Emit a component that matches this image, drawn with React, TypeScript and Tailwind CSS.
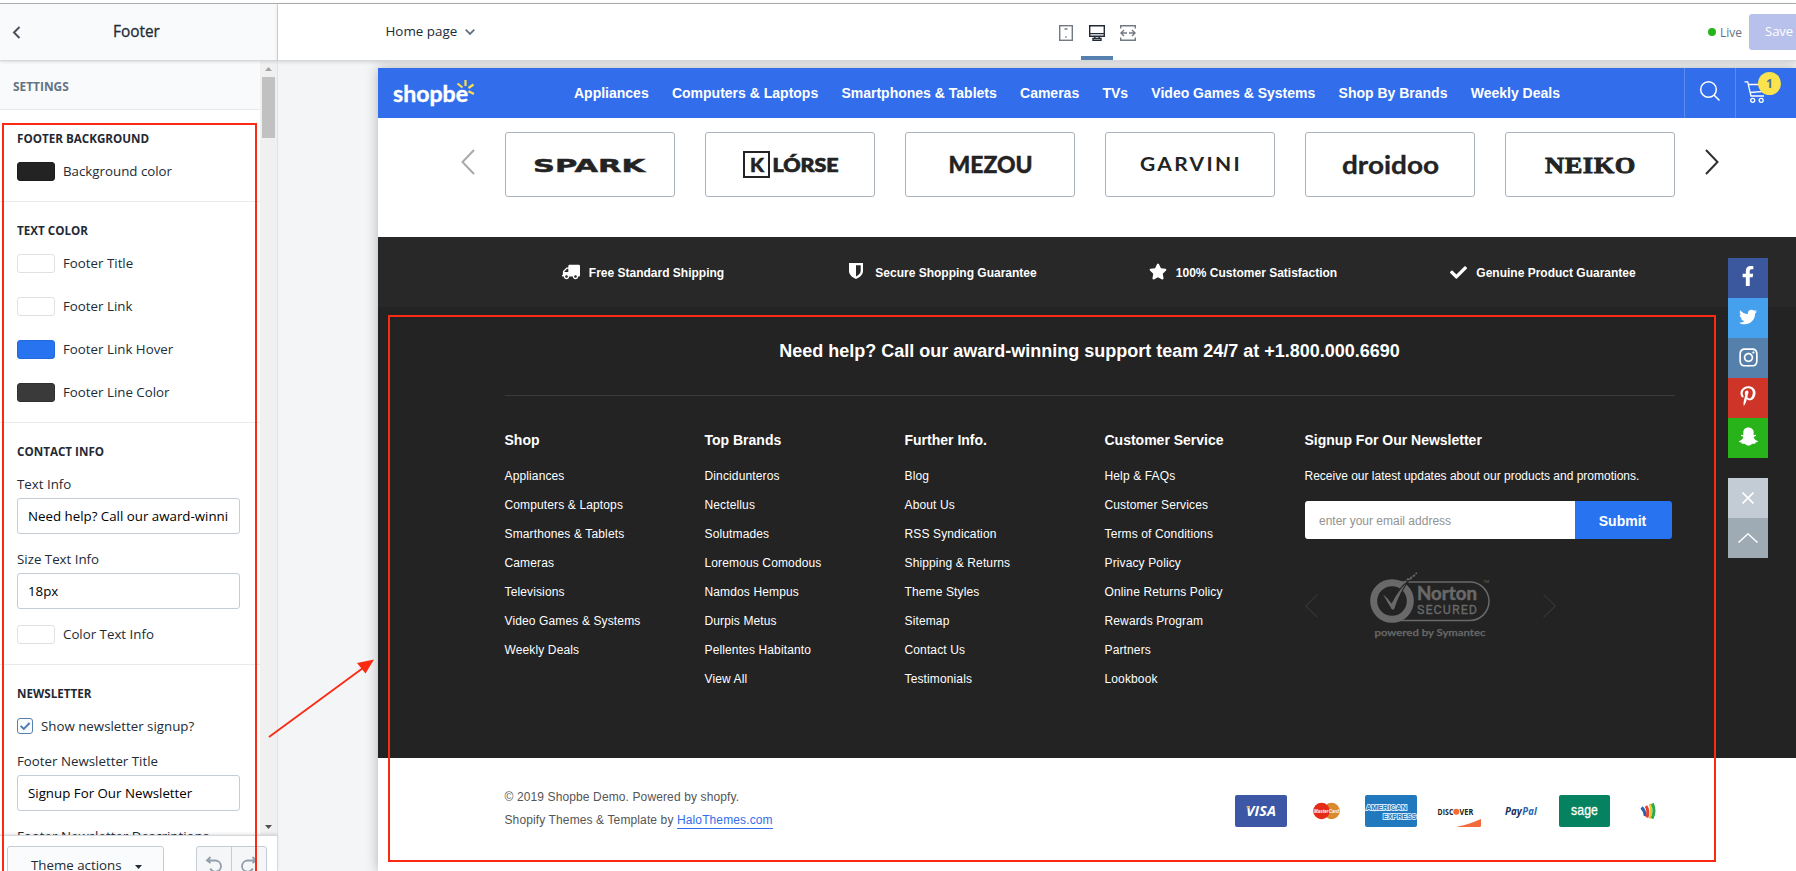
import React from 'react';
import {
  FaTruck,
  FaStar,
  FaCheck,
  FaFacebookF,
  FaTwitter,
  FaInstagram,
  FaPinterestP,
  FaSnapchatGhost,
} from 'react-icons/fa';

const navItems = [
  'Appliances',
  'Computers & Laptops',
  'Smartphones & Tablets',
  'Cameras',
  'TVs',
  'Video Games & Systems',
  'Shop By Brands',
  'Weekly Deals',
];

const footerColumns = [
  {
    title: 'Shop',
    links: ['Appliances', 'Computers & Laptops', 'Smarthones & Tablets', 'Cameras', 'Televisions', 'Video Games & Systems', 'Weekly Deals'],
  },
  {
    title: 'Top Brands',
    links: ['Dincidunteros', 'Nectellus', 'Solutmades', 'Loremous Comodous', 'Namdos Hempus', 'Durpis Metus', 'Pellentes Habitanto', 'View All'],
  },
  {
    title: 'Further Info.',
    links: ['Blog', 'About Us', 'RSS Syndication', 'Shipping & Returns', 'Theme Styles', 'Sitemap', 'Contact Us', 'Testimonials'],
  },
  {
    title: 'Customer Service',
    links: ['Help & FAQs', 'Customer Services', 'Terms of Conditions', 'Privacy Policy', 'Online Returns Policy', 'Rewards Program', 'Partners', 'Lookbook'],
  },
];

function Swatch({ label, color }: { label: string; color: string }) {
  return (
    <div className="flex h-[19px] items-center gap-2">
      <span className={`h-[19px] w-[38px] rounded-[3px] border ${color}`} />
      <span className="pb-[2px] leading-5">{label}</span>
    </div>
  );
}

function SectionTitle({ children }: { children: React.ReactNode }) {
  return <h3 className="h-5 text-[11.65px] font-bold leading-5 text-[#1f2a36]">{children}</h3>;
}

function Field({ label, value }: { label: string; value: string }) {
  return (
    <div>
      <div className="h-5 leading-5">{label}</div>
      <div className="mt-1 h-9 w-[223px] whitespace-nowrap rounded-[3px] border border-[#c4cdd5] pl-[10px] leading-[34px] text-black">
        {value}
      </div>
    </div>
  );
}

function Sidebar() {
  return (
    <aside className="flex w-[278px] shrink-0 flex-col border-r border-[#dfe3e8] bg-white text-[13.3px] text-[#212b36]">
      <div className="z-10 flex h-[57px] shrink-0 items-center border-b border-[#d5d8da] bg-[#f9fafc] shadow-[0_1px_3px_rgba(0,0,0,0.12)]">
        <svg className="ml-3 mt-px h-[13px] w-[9px]" viewBox="0 0 9 13" fill="none" stroke="#4a5158" strokeWidth="2">
          <path d="M7.5 1 2 6.5 7.5 12" />
        </svg>
        <span className="ml-[92px] text-[15.4px] font-medium leading-5 text-[#212b36] [-webkit-text-stroke:0.3px_#212b36]">Footer</span>
      </div>
      <div className="flex min-h-0 flex-1">
        <div className="w-[260px] overflow-hidden">
          <div className="flex h-[49px] items-center border-b border-[#e6e8ea] bg-[#f9fafc] pb-px pl-[13px] pt-1 text-[11.9px] font-bold text-[#637381]">
            SETTINGS
          </div>
          <section className="h-[92px] border-b border-[#e8eaec] pl-[17px] pt-[19px]">
            <SectionTitle>FOOTER BACKGROUND</SectionTitle>
            <div className="mt-[13px]">
              <Swatch label="Background color" color="bg-[#232323] border-[#1c1c1c]" />
            </div>
          </section>
          <section className="h-[221px] border-b border-[#e8eaec] pl-[17px] pt-[19px]">
            <SectionTitle>TEXT COLOR</SectionTitle>
            <div className="mt-[13px] flex flex-col gap-6">
              <Swatch label="Footer Title" color="bg-white border-[#dfe1e3]" />
              <Swatch label="Footer Link" color="bg-white border-[#dfe1e3]" />
              <Swatch label="Footer Link Hover" color="bg-[#2874f0] border-[#2369dc]" />
              <Swatch label="Footer Line Color" color="bg-[#3a3a3a] border-[#303030]" />
            </div>
          </section>
          <section className="h-[242px] border-b border-[#e8eaec] pl-[17px] pt-[19px]">
            <SectionTitle>CONTACT INFO</SectionTitle>
            <div className="mt-3 flex flex-col gap-[15px]">
              <Field label="Text Info" value="Need help? Call our award-winni" />
              <Field label="Size Text Info" value="18px" />
            </div>
            <div className="mt-4">
              <Swatch label="Color Text Info" color="bg-white border-[#dfe1e3]" />
            </div>
          </section>
          <section className="pl-[17px] pt-[19px]">
            <SectionTitle>NEWSLETTER</SectionTitle>
            <div className="mb-[17px] mt-[14px] flex h-4 items-center gap-2">
              <svg className="h-4 w-4" viewBox="0 0 16 16" fill="none">
                <rect x="0.5" y="0.5" width="15" height="15" rx="2.5" fill="#fafbfd" stroke="#5580b0" />
                <path d="M3.6 7.8 6.8 11 12.6 5" stroke="#4d7cb4" strokeWidth="1.9" />
              </svg>
              <span className="pt-px">Show newsletter signup?</span>
            </div>
            <Field label="Footer Newsletter Title" value="Signup For Our Newsletter" />
            <div className="mt-[15px] h-5 whitespace-nowrap leading-5">Footer Newsletter Descriptions</div>
          </section>
        </div>
        <div className="flex w-[17px] flex-col items-center justify-between bg-[#f0f0f0] pb-[6px] pt-[6px]">
          <div className="flex flex-col items-center gap-[6px]">
            <svg className="h-1 w-[7px]" viewBox="0 0 7 4" fill="#a3a3a3">
              <path d="M3.5 0 7 4H0z" />
            </svg>
            <div className="h-[61px] w-[13px] bg-[#c1c1c1]" />
          </div>
          <svg className="h-1 w-[7px]" viewBox="0 0 7 4" fill="#505050">
            <path d="M0 0h7L3.5 4z" />
          </svg>
        </div>
      </div>
      <div className="z-10 flex h-[36px] shrink-0 items-start justify-between overflow-hidden border-t border-[#d5d8da] bg-white pl-[7px] pr-[10px] pt-[10px] shadow-[0_-1px_3px_rgba(0,0,0,0.12)]">
        <div className="flex h-9 w-[157px] items-center gap-[13px] rounded-[3px] border border-[#c4cdd5] bg-[#fafbfc] pl-[23px]">
          <span className="pt-px leading-5">Theme actions</span>
          <svg className="mt-[6px] h-1 w-[7px]" viewBox="0 0 7 4" fill="#212b36">
            <path d="M0 0h7L3.5 4z" />
          </svg>
        </div>
        <div className="flex h-9 w-[71px] rounded-[3px] border border-[#c4cdd5] bg-[#f4f6f8] text-[#919eab]">
          <div className="flex flex-1 items-start justify-center border-r border-[#c4cdd5] pt-[9px]">
            <svg className="h-5 w-[18px]" viewBox="0 0 18 20" fill="none" stroke="currentColor" strokeWidth="1.8">
              <path d="M5.5 1 2 4.5 5.5 7M2 4.5h8.3a5.6 5.6 0 1 1-5 8" />
            </svg>
          </div>
          <div className="flex flex-1 items-start justify-center pt-[9px]">
            <svg className="h-5 w-[18px] -scale-x-100" viewBox="0 0 18 20" fill="none" stroke="currentColor" strokeWidth="1.8">
              <path d="M5.5 1 2 4.5 5.5 7M2 4.5h8.3a5.6 5.6 0 1 1-5 8" />
            </svg>
          </div>
        </div>
      </div>
    </aside>
  );
}

function TopBar() {
  return (
    <header className="z-10 flex h-[57px] shrink-0 items-stretch border-b border-[#d5d8da] bg-white shadow-[0_1px_4px_rgba(0,0,0,0.15)]">
      <div className="flex w-[772px] items-center gap-2 pb-px pl-[107.5px] text-[13.4px] text-[#212b36]">
        <span>Home page</span>
        <svg className="h-[6px] w-[10px]" viewBox="0 0 10 6" fill="none" stroke="#637381" strokeWidth="1.8">
          <path d="M.7.7 5 5 9.3.7" />
        </svg>
      </div>
      <div className="flex">
        <div className="flex w-[31px] items-center justify-center pl-px pt-px">
          <svg className="h-4 w-[14px]" viewBox="0 0 14 16" fill="none" stroke="#727980" strokeWidth="1.4">
            <rect x="0.7" y="0.7" width="12.6" height="14.6" />
            <path d="M5.5 4h3M6.3 12h1.4" />
          </svg>
        </div>
        <div className="flex w-8 items-center justify-center border-b-4 border-[#5580b0] pt-[5px]">
          <svg className="h-4 w-4" viewBox="0 0 16 16" fill="none" stroke="#212b36" strokeWidth="1.4">
            <path d="M.7.7h14.6v10.6H.7zM.7 8.6h14.6M5.8 11.3v2M10.2 11.3v2M4 15.3V13.4h8v1.9z" />
          </svg>
        </div>
        <div className="flex w-[30px] items-center justify-center pt-px">
          <svg className="h-4 w-4" viewBox="0 0 16 16" fill="none" stroke="#727980" strokeWidth="1.4">
            <path d="M.7 3.5V.7h14.6v2.8M.7 12.5v2.8h14.6v-2.8M7 8H1M4 5 1 8l3 3M9 8h6M12 5l3 3-3 3" />
          </svg>
        </div>
      </div>
      <div className="ml-auto flex items-center">
        <span className="h-2 w-2 rounded-full bg-[#25b31a]" />
        <span className="ml-1 w-[29px] pt-[2px] text-[12px] text-[#637381]">Live</span>
        <span className="flex h-9 w-[47px] items-center rounded-l-[3px] bg-[#b8c1eb] pb-px pl-4 text-[13px] text-white">Save</span>
      </div>
    </header>
  );
}

function ShopLogo() {
  return (
    <svg className="h-[50px] w-[86px]" viewBox="0 0 86 50" fill="none">
      <text x="0" y="34" textLength="75" lengthAdjust="spacingAndGlyphs" fill="#fff" stroke="#fff" strokeWidth="0.4" className="font-['Lato'] text-[22.5px] font-bold">
        shopbe
      </text>
      <g stroke="#f9e04c" strokeWidth="2.2">
        <path d="M72.5 12v6M64.5 15.5l5 4M80.5 16.5l-5 3.5M75.5 23.2l5.5 2.8" />
      </g>
    </svg>
  );
}

function StoreNav() {
  return (
    <nav className="flex h-[50px] shrink-0 items-stretch bg-[#326eeb] text-white">
      <div className="w-[196px] pl-[15px]">
        <ShopLogo />
      </div>
      <div className="flex w-[986px] items-center justify-between whitespace-nowrap pb-px pt-[2px] text-[14px] font-bold">
        {navItems.map((n) => (
          <span key={n}>{n}</span>
        ))}
      </div>
      <div className="ml-auto flex">
        <div className="flex w-[51px] justify-center border-l border-[#5b8bf0] pt-3">
          <svg className="h-[22px] w-[22px]" viewBox="0 0 22 22" fill="none" stroke="#fff" strokeWidth="1.5">
            <circle cx="9.5" cy="9.5" r="7.8" />
            <path d="m15 15 5.5 5.5" />
          </svg>
        </div>
        <div className="relative w-[61px] border-l border-[#5b8bf0] pl-2 pt-[13px]">
          <svg className="h-[23px] w-6" viewBox="0 0 24 23" fill="none" stroke="#fff" strokeWidth="1.3">
            <path d="M.5.8h3.2L7 15h13M4.2 3.5h18L20 10.5 6 11.5" />
            <circle cx="8.7" cy="19.3" r="2" />
            <circle cx="17.2" cy="19.3" r="2" />
          </svg>
          <span className="absolute left-[22px] top-1 flex h-[23px] w-[23px] items-center justify-center rounded-full bg-[#fbe34d] font-['Open_Sans'] text-[12px] font-bold text-[#4a6f9c]">
            1
          </span>
        </div>
      </div>
    </nav>
  );
}

function BrandCard({ children }: { children: React.ReactNode }) {
  return (
    <div className="h-[65px] w-[170px] rounded-[3px] border border-[#acb2b9]">
      <svg className="h-[63px] w-[168px]" viewBox="0 0 168 63" fill="#232323">
        {children}
      </svg>
    </div>
  );
}

function Brands() {
  return (
    <div className="flex h-[119px] shrink-0 items-start pl-[83px] pt-[14px]">
      <svg className="mt-[17px] h-[26px] w-[14px]" viewBox="0 0 14 26" fill="none" stroke="#a9a9a9" strokeWidth="2">
        <path d="M13 1 1.5 13 13 25" />
      </svg>
      <div className="ml-[30px] flex gap-[30px]">
        <BrandCard>
          <text x="27" y="39" textLength="112" lengthAdjust="spacingAndGlyphs" stroke="#2a2a2a" strokeWidth="0.5" className="font-['DejaVu_Sans'] text-[18.5px] font-bold">
            SPARK
          </text>
        </BrandCard>
        <BrandCard>
          <rect x="38" y="19" width="25" height="25" fill="none" stroke="#232323" strokeWidth="2" />
          <text x="44" y="38.500" textLength="14" lengthAdjust="spacingAndGlyphs" stroke="#232323" strokeWidth="0.5" className="font-['Lato'] text-[19.5px] font-black">
            K
          </text>
          <text x="66.500" y="38.500" textLength="66" lengthAdjust="spacingAndGlyphs" stroke="#232323" strokeWidth="0.7" className="font-['Lato'] text-[19px] font-black">
            LÓRSE
          </text>
        </BrandCard>
        <BrandCard>
          <text x="42.500" y="40" textLength="84" lengthAdjust="spacingAndGlyphs" stroke="#232323" strokeWidth="0.4" className="font-['Lato'] text-[23.5px] font-black">
            MEZOU
          </text>
        </BrandCard>
        <BrandCard>
          <text x="34" y="38" textLength="102" lengthAdjust="spacingAndGlyphs" className="font-['Lato'] text-[18px] font-bold tracking-[2px]">
            GARVINI
          </text>
        </BrandCard>
        <BrandCard>
          <text x="36" y="40.500" textLength="97" lengthAdjust="spacingAndGlyphs" stroke="#232323" strokeWidth="0.3" className="font-['Lato'] text-[25px] font-bold">
            droidoo
          </text>
        </BrandCard>
        <BrandCard>
          <text x="39" y="40" textLength="91" lengthAdjust="spacingAndGlyphs" stroke="#232323" strokeWidth="0.8" className="font-['Liberation_Serif'] text-[24px] font-bold tracking-[0.5px]">
            NEIKO
          </text>
        </BrandCard>
      </div>
      <svg className="ml-[30px] mt-[17px] h-[26px] w-[14px]" viewBox="0 0 14 26" fill="none" stroke="#2e2e2e" strokeWidth="2">
        <path d="M1 1l11.5 12L1 25" />
      </svg>
    </div>
  );
}

function Guarantees() {
  return (
    <div className="grid h-[70px] shrink-0 grid-cols-[repeat(4,300px)] bg-[#282828] pl-[115px] pt-[2px] text-[12px] font-bold text-white">
      <div className="flex items-center justify-center">
        <FaTruck className="mb-[2px] mr-[9px] h-[18px] w-[18px] -scale-x-100" />
        Free Standard Shipping
      </div>
      <div className="flex items-center justify-center">
        <svg className="mb-1 mr-3 h-4 w-[14px]" viewBox="0 0 14 16" fill="#fff" fillRule="evenodd">
          <path d="M0 0h14v8c0 3.5-3 6.3-7 8-4-1.700-7-4.500-7-8zM7 2.300v11.200c2.800-1.500 4.700-3.300 4.700-5.700V2.300z" />
        </svg>
        Secure Shopping Guarantee
      </div>
      <div className="flex items-center justify-center">
        <FaStar className="mb-1 mr-[9px] h-[17px] w-[18px]" />
        100% Customer Satisfaction
      </div>
      <div className="flex items-center justify-center">
        <FaCheck className="mb-[2px] mr-[9px] h-[17px] w-[17px]" />
        Genuine Product Guarantee
      </div>
    </div>
  );
}

function NortonBadge() {
  return (
    <svg className="h-[68px] w-[122px]" viewBox="0 0 122 68" fill="#696969">
      <rect x="12" y="10" width="107" height="38.5" rx="19.2" fill="none" stroke="#696969" strokeWidth="1.5" />
      <circle cx="22" cy="29" r="18.3" fill="#232323" stroke="#696969" strokeWidth="7" />
      <path d="M12 22c3 0 6 4 9.500 8.500C26 22 31 14 39 8.500 33 16 28 27 24.500 38h-3C18 32 15 27 12 22z" stroke="#232323" strokeWidth="1.2" />
      <path d="M34 11l4-4 2 1 2-4 2 0 1-2 2-1" fill="none" stroke="#696969" strokeWidth="1.7" strokeDasharray="3 1.3" />
      <text x="47" y="28" textLength="60" lengthAdjust="spacingAndGlyphs" stroke="#696969" strokeWidth="0.5" className="font-['Lato'] text-[19px] font-bold">
        Norton
      </text>
      <text x="47" y="42" textLength="60" stroke="#696969" strokeWidth="0.3" className="font-['Roboto'] text-[12.5px]">
        SECURED
      </text>
      <text x="4.5" y="64" textLength="111" lengthAdjust="spacingAndGlyphs" stroke="#696969" strokeWidth="0.25" className="font-['Lato'] text-[10px] font-semibold">
        powered by Symantec
      </text>
      <text x="113" y="11" className="font-['Roboto'] text-[4px]">
        TM
      </text>
    </svg>
  );
}

function Newsletter() {
  return (
    <div className="w-[370px]">
      <h4 className="h-5 text-[14px] font-bold leading-5">Signup For Our Newsletter</h4>
      <p className="mt-4 h-5 whitespace-nowrap leading-5">Receive our latest updates about our products and promotions.</p>
      <div className="ml-[0.5px] mt-[15px] flex h-[38px] w-[367px] overflow-hidden rounded-[3px]">
        <div className="w-[270px] bg-white pl-[14px] pt-px leading-[38px] text-[#929292]">enter your email address</div>
        <div className="flex-1 bg-[#2874f0] pt-px pr-[2px] text-center text-[14px] font-bold leading-[38px]">Submit</div>
      </div>
      <div className="mt-[33px] flex items-start">
        <svg className="mt-[22px] h-6 w-[13px]" viewBox="0 0 13 24" fill="none" stroke="#343434" strokeWidth="1.2">
          <path d="M12.5.5.7 12l11.800 11.500" />
        </svg>
        <div className="ml-[52px]">
          <NortonBadge />
        </div>
        <svg className="ml-[51px] mt-[22px] h-6 w-[13px]" viewBox="0 0 13 24" fill="none" stroke="#343434" strokeWidth="1.2">
          <path d="M.5.5 12.300 12 .5 23.500" />
        </svg>
      </div>
    </div>
  );
}

function StoreFooter() {
  return (
    <footer className="h-[451px] shrink-0 bg-[#232323] pl-[127px] text-[12px] text-white">
      <div className="flex h-[89px] w-[1170px] items-center justify-center border-b border-[#3a3a3a] pr-px pt-px text-[18px] font-bold">
        Need help? Call our award-winning support team 24/7 at +1.800.000.6690
      </div>
      <div className="-ml-[0.5px] flex pt-[34px]">
        {footerColumns.map((c) => (
          <div key={c.title} className="w-[200px]">
            <h4 className="h-5 text-[14px] font-bold leading-5">{c.title}</h4>
            <ul className="mt-4 flex flex-col gap-[9px] tracking-[0.13px]">
              {c.links.map((l) => (
                <li key={l} className="h-5 leading-5">
                  {l}
                </li>
              ))}
            </ul>
          </div>
        ))}
        <Newsletter />
      </div>
    </footer>
  );
}

function Payments() {
  return (
    <svg className="h-8 w-[424px]" viewBox="0 0 424 32">
      <rect x="0" y="0" width="52" height="32" rx="2" fill="#3b57a6" />
      <text x="11" y="21" textLength="30" lengthAdjust="spacingAndGlyphs" fill="#fff" className="font-['Open_Sans'] text-[14px] font-bold italic">
        VISA
      </text>
      <path d="M10.5 11.5h4l1 3z" fill="#f0a03c" />
      <circle cx="96.5" cy="16" r="8.3" fill="#d98a2f" />
      <circle cx="86.5" cy="16" r="8.3" fill="#e52a17" />
      <text x="79" y="18" textLength="25" lengthAdjust="spacingAndGlyphs" fill="#fff" className="font-['Liberation_Sans'] text-[5.5px] font-bold italic">
        MasterCard
      </text>
      <rect x="130" y="0" width="52" height="32" rx="2" fill="#2278bd" />
      <text x="131" y="15" textLength="41" lengthAdjust="spacingAndGlyphs" fill="#2278bd" stroke="#d6ebfa" strokeWidth="1.8" paintOrder="stroke" className="font-['Liberation_Sans'] text-[7.5px] font-bold">
        AMERICAN
      </text>
      <text x="148" y="23.5" textLength="33.5" lengthAdjust="spacingAndGlyphs" fill="#2278bd" stroke="#d6ebfa" strokeWidth="1.8" paintOrder="stroke" className="font-['Liberation_Sans'] text-[7.5px] font-bold">
        EXPRESS
      </text>
      <text x="202.5" y="20" textLength="16" lengthAdjust="spacingAndGlyphs" fill="#1d1d1b" className="font-['Open_Sans'] text-[9.5px] font-bold">
        DISC
      </text>
      <circle cx="221.3" cy="16.7" r="3" fill="#f26b33" />
      <text x="224.5" y="20" textLength="14" lengthAdjust="spacingAndGlyphs" fill="#1d1d1b" className="font-['Open_Sans'] text-[9.5px] font-bold">
        VER
      </text>
      <path d="M221 32c9-1.500 17-4.500 25-8v6.500a1.500 1.500 0 0 1-1.500 1.500z" fill="#f36b3b" />
      <text x="270" y="20" textLength="17" lengthAdjust="spacingAndGlyphs" fill="#17305e" className="font-['Open_Sans'] text-[10px] font-bold italic">
        Pay
      </text>
      <text x="287.3" y="20" textLength="14.5" lengthAdjust="spacingAndGlyphs" fill="#2667b0" className="font-['Open_Sans'] text-[10px] font-bold italic">
        Pal
      </text>
      <rect x="324" y="0" width="51" height="32" rx="2" fill="#05825f" />
      <text x="336" y="19.5" textLength="27" lengthAdjust="spacingAndGlyphs" fill="#fff" stroke="#fff" strokeWidth="0.3" className="font-['Liberation_Sans'] text-[15px]">
        sage
      </text>
      <g fill="none" strokeWidth="3">
        <path d="M406.500 12.500c2.300 2 3.500 4.500 3.800 8.500" stroke="#2c5fae" />
        <path d="M411 11c2 3 2.500 7 .800 11.500" stroke="#e0452c" />
        <path d="M414.800 9c2 5 1.800 10-.300 14.500" stroke="#f2c230" strokeWidth="2.2" />
        <path d="M417.300 8.500c2.300 5 2.300 10-.300 15" stroke="#2fa84a" />
      </g>
    </svg>
  );
}

function StoreBottom() {
  return (
    <div className="flex flex-1 items-start bg-white pl-[126.5px] pt-[27px] text-[12px] tracking-[0.12px] text-[#555]">
      <div className="w-[730.5px] pt-px">
        <p className="h-[23px] leading-[23px]">© 2019 Shopbe Demo. Powered by shopfy.</p>
        <p className="leading-[23px]">
          Shopify Themes &amp; Template by <span className="border-b border-[#326eeb] pb-px text-[#326eeb]">HaloThemes.com</span>
        </p>
      </div>
      <div className="pt-[10px]">
        <Payments />
      </div>
    </div>
  );
}

function SocialRail() {
  return (
    <div className="absolute left-[1728px] top-[258px] flex w-10 flex-col text-white">
      <div className="flex h-10 items-center justify-center bg-[#3b579d] pb-1">
        <FaFacebookF className="h-5 w-5" />
      </div>
      <div className="flex h-10 items-center justify-center bg-[#45a0ee] pb-[3px]">
        <FaTwitter className="h-[18px] w-[18px]" />
      </div>
      <div className="flex h-10 items-center justify-center bg-[#5580ac] pb-[2px]">
        <FaInstagram className="h-[21px] w-[21px]" />
      </div>
      <div className="flex h-10 items-center justify-center bg-[#ce3427] pb-1">
        <FaPinterestP className="h-5 w-5" />
      </div>
      <div className="flex h-10 items-center justify-center bg-[#29b31a] pb-[3px]">
        <FaSnapchatGhost className="h-[19px] w-[19px]" />
      </div>
      <div className="mt-5 flex h-10 items-center justify-center bg-[#c3cbd5]">
        <svg className="h-3 w-3" viewBox="0 0 12 12" stroke="#fff" strokeWidth="1.6">
          <path d="m.5.5 11 11M11.5.5l-11 11" />
        </svg>
      </div>
      <div className="flex h-10 items-center justify-center bg-[#9eabb5]">
        <svg className="h-[10px] w-5" viewBox="0 0 20 10" fill="none" stroke="#fff" strokeWidth="1.4">
          <path d="M.5 9.500 10 .8l9.500 8.700" />
        </svg>
      </div>
    </div>
  );
}

function Annotations() {
  return (
    <>
      <div className="pointer-events-none absolute left-[2px] top-[123px] z-20 h-[760px] w-[255px] border-2 border-[#fb2a12]" />
      <div className="pointer-events-none absolute left-[388px] top-[315px] z-20 h-[547px] w-[1328px] border-2 border-[#fb2a12]" />
      <svg className="pointer-events-none absolute left-[260px] top-[650px] z-20 h-[100px] w-[120px]" viewBox="0 0 120 100">
        <path d="M9 87 103 18" stroke="#fb2a12" strokeWidth="1.8" />
        <path d="M114 9.500 105.500 23.500 97 13z" fill="#fb2a12" />
      </svg>
    </>
  );
}

export default function App() {
  return (
    <div className="relative flex h-[871px] w-[1796px] flex-col overflow-hidden bg-white font-['Open_Sans',sans-serif]">
      <div className="h-1 shrink-0 border-b border-[#b0b0b0]" />
      <div className="flex min-h-0 flex-1">
        <Sidebar />
        <div className="flex min-w-0 flex-1 flex-col bg-[#f3f5f7]">
          <TopBar />
          <div className="flex min-h-0 flex-1 pl-[100px] pt-[7px]">
            <div className="flex min-w-0 flex-1 flex-col bg-white font-['Liberation_Sans',sans-serif] shadow-[0_0_12px_rgba(0,0,0,0.28)]">
              <StoreNav />
              <Brands />
              <Guarantees />
              <StoreFooter />
              <StoreBottom />
            </div>
          </div>
        </div>
      </div>
      <SocialRail />
      <Annotations />
    </div>
  );
}
